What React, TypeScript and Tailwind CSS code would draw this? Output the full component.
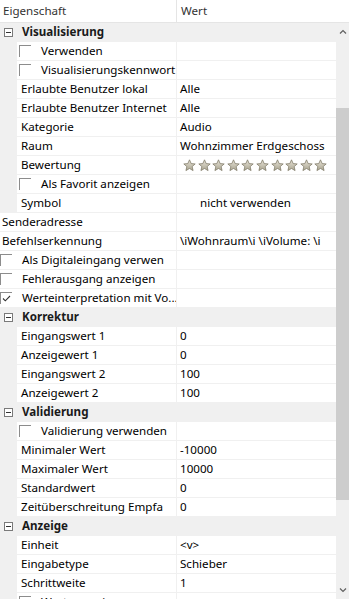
import React from "react";

type RowType =
  | { kind: "cat"; label: string }
  | {
      kind: "prop";
      label: string;
      value?: string;
      level?: 0 | 1;
      check?: boolean;
      stars?: boolean;
      symbol?: boolean;
    };

const ROWS: Array<RowType> = [
  { kind: "cat", label: "Visualisierung" },
  { kind: "prop", label: "Verwenden", check: false },
  { kind: "prop", label: "Visualisierungskennwort", check: false },
  { kind: "prop", label: "Erlaubte Benutzer lokal", value: "Alle" },
  { kind: "prop", label: "Erlaubte Benutzer Internet", value: "Alle" },
  { kind: "prop", label: "Kategorie", value: "Audio" },
  { kind: "prop", label: "Raum", value: "Wohnzimmer Erdgeschoss" },
  { kind: "prop", label: "Bewertung", stars: true },
  { kind: "prop", label: "Als Favorit anzeigen", check: false },
  { kind: "prop", label: "Symbol", value: "nicht verwenden", symbol: true },
  { kind: "prop", label: "Senderadresse", level: 0 },
  { kind: "prop", label: "Befehlserkennung", value: "\\iWohnraum\\i \\iVolume: \\i", level: 0 },
  { kind: "prop", label: "Als Digitaleingang verwen", check: false, level: 0 },
  { kind: "prop", label: "Fehlerausgang anzeigen", check: false, level: 0 },
  { kind: "prop", label: "Werteinterpretation mit Vo...", check: true, level: 0 },
  { kind: "cat", label: "Korrektur" },
  { kind: "prop", label: "Eingangswert 1", value: "0" },
  { kind: "prop", label: "Anzeigewert 1", value: "0" },
  { kind: "prop", label: "Eingangswert 2", value: "100" },
  { kind: "prop", label: "Anzeigewert 2", value: "100" },
  { kind: "cat", label: "Validierung" },
  { kind: "prop", label: "Validierung verwenden", check: false },
  { kind: "prop", label: "Minimaler Wert", value: "-10000" },
  { kind: "prop", label: "Maximaler Wert", value: "10000" },
  { kind: "prop", label: "Standardwert", value: "0" },
  { kind: "prop", label: "Zeitüberschreitung Empfa", value: "0" },
  { kind: "cat", label: "Anzeige" },
  { kind: "prop", label: "Einheit", value: "<v>" },
  { kind: "prop", label: "Eingabetype", value: "Schieber" },
  { kind: "prop", label: "Schrittweite", value: "1" },
  { kind: "prop", label: "Werte anzeigen", check: false },
];

const Star = () => (
  <svg width="13" height="13" viewBox="0 0 24 24">
    <defs>
      <linearGradient id="starfill" x1="0" y1="0" x2="0" y2="1">
        <stop offset="0" stopColor="#e8e4d8" />
        <stop offset="1" stopColor="#aaa591" />
      </linearGradient>
    </defs>
    <path
      d="M12 1.5l3.1 7 7.4.6-5.6 4.9 1.7 7.4L12 17.5l-6.6 3.9 1.7-7.4-5.6-4.9 7.4-.6z"
      fill="url(#starfill)"
      stroke="#7d7866"
      strokeWidth="1.4"
      strokeLinejoin="round"
    />
  </svg>
);

const CheckBox = ({ checked }: { checked: boolean }) => (
  <div className="relative h-[12px] w-[12px] shrink-0 border-l border-t border-[#8c8c8c]">
    {checked && (
      <svg className="absolute left-[1px] top-[1px]" width="9" height="9" viewBox="0 0 9 9">
        <path d="M1 4.5l2.3 2.3L8 2" fill="none" stroke="#333" strokeWidth="1.1" />
      </svg>
    )}
  </div>
);

const Row = ({ row }: { row: RowType }) => {
  if (row.kind === "cat") {
    return (
      <div className="flex h-[19px] items-center border-b border-[#f0f0f0] bg-[#f0f0f0]">
        <div className="ml-[4px] flex h-[9px] w-[9px] items-center justify-center border border-[#7a7a7a] bg-white">
          <div className="h-px w-[5px] bg-[#333]" />
        </div>
        <span className="ml-[9px] font-bold text-[#1a1a1a]">{row.label}</span>
      </div>
    );
  }
  const level = row.level ?? 1;
  return (
    <div className="flex h-[19px] border-b border-[#f0f0f0] bg-white">
      <div className="flex w-[177px] shrink-0 overflow-hidden border-r border-[#f0f0f0]">
        {level === 1 && <div className="w-[17px] shrink-0 bg-[#f0f0f0]" />}
        {row.check !== undefined ? (
          <div className={`flex items-center ${level === 1 ? "pl-[2px]" : "pl-0"}`}>
            <CheckBox checked={row.check} />
            <span className="ml-[10px] whitespace-nowrap">{row.label}</span>
          </div>
        ) : (
          <span className={`whitespace-nowrap ${level === 1 ? "pl-[4px]" : "pl-[2px]"}`}>
            {row.label}
          </span>
        )}
      </div>
      <div className="flex min-w-0 flex-1 items-center overflow-hidden pl-[3px]">
        {row.stars ? (
          <div className="ml-[3px] flex gap-[1.6px]">
            {Array.from({ length: 10 }).map((_, i) => (
              <Star key={i} />
            ))}
          </div>
        ) : (
          <span className={`whitespace-nowrap ${row.symbol ? "pl-[20px]" : ""}`}>{row.value}</span>
        )}
      </div>
    </div>
  );
};

const App: React.FC = () => {
  return (
    <div
      className="h-[599px] w-[349px] overflow-hidden bg-white text-[11.6px] leading-[18px] text-black"
      style={{ fontFamily: '"Segoe UI", "Noto Sans", sans-serif' }}
    >
      <div className="flex h-[23px] items-center border-b border-[#e5e5e5] bg-white text-[#333]">
        <div className="flex h-full w-[177px] items-center border-r border-[#e5e5e5] pl-[3px]">
          Eigenschaft
        </div>
        <div className="pl-[4px]">Wert</div>
      </div>
      <div className="flex">
        <div className="w-[336px] shrink-0">
          {ROWS.map((row, i) => (
            <Row key={i} row={row} />
          ))}
        </div>
        <div className="flex h-[576px] w-[13px] shrink-0 flex-col bg-[#f0f0f0]">
          <div className="flex h-[17px] items-center justify-center">
            <svg width="8" height="5" viewBox="0 0 8 5">
              <path d="M1 4.5L4 1.5l3 3" fill="none" stroke="#606060" strokeWidth="1.2" />
            </svg>
          </div>
          <div className="mt-[68px] h-[392px] w-full bg-[#cdcdcd]" />
          <div className="flex-1" />
          <div className="flex h-[17px] items-center justify-center">
            <svg width="8" height="5" viewBox="0 0 8 5">
              <path d="M1 .5L4 3.5l3-3" fill="none" stroke="#606060" strokeWidth="1.2" />
            </svg>
          </div>
        </div>
      </div>
    </div>
  );
};

export default App;
